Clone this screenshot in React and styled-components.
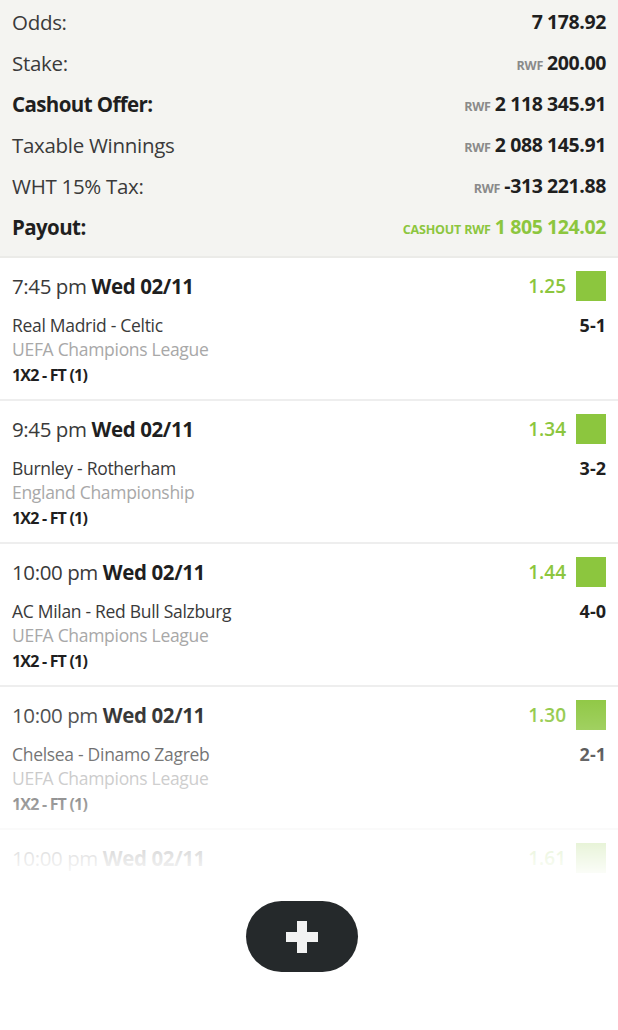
import React from 'react'
import styled, { createGlobalStyle } from 'styled-components'

const GlobalStyle = createGlobalStyle`
  *, *::before, *::after {
    box-sizing: border-box;
  }

  html, body {
    margin: 0;
    padding: 0;
    background: #ffffff;
    font-family: 'Open Sans', 'Liberation Sans', sans-serif;
    color: #2b2b2b;
  }
`

const Page = styled.div`
  width: 618px;
  display: flex;
  flex-direction: column;
`

const Summary = styled.div`
  background-color: #f4f4f1;
  padding: 1px 12px 9px 12px;
  border-bottom: 2px solid #ebebe8;
`

const SummaryRow = styled.div`
  height: 41px;
  display: flex;
  align-items: center;
  justify-content: space-between;
`

const Label = styled.span`
  font-size: 20.5px;
  font-weight: ${(p) => (p.bold ? 700 : 400)};
  color: ${(p) => (p.bold ? '#1f1f1f' : '#3a3a3a')};
  letter-spacing: ${(p) => (p.bold ? '-0.6px' : '-0.3px')};
`

const Value = styled.span`
  display: flex;
  align-items: baseline;
  gap: 4px;
  font-size: 19.5px;
  font-weight: 700;
  letter-spacing: -0.4px;
  color: ${(p) => (p.green ? '#8cc63e' : '#1f1f1f')};
`

const Currency = styled.span`
  font-size: 12.5px;
  font-weight: 700;
  color: ${(p) => (p.green ? '#8cc63e' : '#8a8a8a')};
  letter-spacing: -0.2px;
`

const ListWrap = styled.div`
  position: relative;
  height: 622px;
  overflow: hidden;
`

const Fade = styled.div`
  position: absolute;
  left: 0;
  right: 0;
  bottom: 0;
  height: 190px;
  background: linear-gradient(
    to bottom,
    rgba(255, 255, 255, 0) 0%,
    rgba(255, 255, 255, 0.3) 35%,
    rgba(255, 255, 255, 0.55) 60%,
    rgba(255, 255, 255, 0.85) 85%,
    rgba(255, 255, 255, 1) 100%
  );
  pointer-events: none;
`

const Card = styled.div`
  height: 143px;
  padding: 13px 12px 0 12px;
  border-bottom: 2px solid #eeeeee;
  display: flex;
  flex-direction: column;
`

const TopLine = styled.div`
  display: flex;
  align-items: center;
  justify-content: space-between;
  height: 30px;
`

const Time = styled.span`
  font-size: 20.5px;
  color: #3a3a3a;
  letter-spacing: -0.4px;

  b {
    font-weight: 700;
    color: #1f1f1f;
  }
`

const OddsBox = styled.div`
  display: flex;
  align-items: center;
  gap: 10px;
`

const OddsValue = styled.span`
  font-size: 19px;
  font-weight: 600;
  color: #8cc63e;
`

const Square = styled.span`
  width: 30px;
  height: 30px;
  background-color: #8cc63e;
`

const MatchLine = styled.div`
  display: flex;
  align-items: center;
  justify-content: space-between;
  margin-top: 11px;
  height: 25px;
`

const Teams = styled.span`
  font-size: 17.5px;
  color: #3a3a3a;
  letter-spacing: -0.3px;
`

const Score = styled.span`
  font-size: 18px;
  font-weight: 700;
  color: #1f1f1f;
`

const League = styled.div`
  font-size: 17.5px;
  color: #a8a8a8;
  height: 25px;
  line-height: 25px;
  letter-spacing: -0.3px;
`

const Market = styled.div`
  font-size: 16px;
  font-weight: 700;
  color: #1f1f1f;
  height: 27px;
  line-height: 27px;
  letter-spacing: -0.8px;
`

const ButtonArea = styled.div`
  display: flex;
  justify-content: center;
  padding: 21px 0 58px 0;
`

const AddButton = styled.button`
  width: 112px;
  height: 71px;
  margin-left: -14px;
  border: none;
  border-radius: 36px;
  background-color: #25292b;
  display: flex;
  align-items: center;
  justify-content: center;
  cursor: pointer;

  &:focus {
    outline: none;
  }
`

const rows = [
  { label: 'Odds:', value: '7 178.92' },
  { label: 'Stake:', currency: 'RWF', value: '200.00' },
  { label: 'Cashout Offer:', bold: true, currency: 'RWF', value: '2 118 345.91' },
  { label: 'Taxable Winnings', currency: 'RWF', value: '2 088 145.91' },
  { label: 'WHT 15% Tax:', currency: 'RWF', value: '-313 221.88' },
  { label: 'Payout:', bold: true, currency: 'CASHOUT RWF', value: '1 805 124.02', green: true },
]

const bets = [
  { time: '7:45 pm', date: 'Wed 02/11', odds: '1.25', teams: 'Real Madrid - Celtic', score: '5-1', league: 'UEFA Champions League' },
  { time: '9:45 pm', date: 'Wed 02/11', odds: '1.34', teams: 'Burnley - Rotherham', score: '3-2', league: 'England Championship' },
  { time: '10:00 pm', date: 'Wed 02/11', odds: '1.44', teams: 'AC Milan - Red Bull Salzburg', score: '4-0', league: 'UEFA Champions League' },
  { time: '10:00 pm', date: 'Wed 02/11', odds: '1.30', teams: 'Chelsea - Dinamo Zagreb', score: '2-1', league: 'UEFA Champions League' },
  { time: '10:00 pm', date: 'Wed 02/11', odds: '1.61' },
]

const App = () => {
  return (
    <Page>
      <GlobalStyle />
      <Summary>
        {rows.map((r) => (
          <SummaryRow key={r.label}>
            <Label bold={r.bold}>{r.label}</Label>
            <Value green={r.green}>
              {r.currency && <Currency green={r.green}>{r.currency}</Currency>}
              {r.value}
            </Value>
          </SummaryRow>
        ))}
      </Summary>
      <ListWrap>
        {bets.map((b, i) => (
          <Card key={i}>
            <TopLine>
              <Time>
                {b.time} <b>{b.date}</b>
              </Time>
              <OddsBox>
                <OddsValue>{b.odds}</OddsValue>
                <Square />
              </OddsBox>
            </TopLine>
            {b.teams && (
              <>
                <MatchLine>
                  <Teams>{b.teams}</Teams>
                  <Score>{b.score}</Score>
                </MatchLine>
                <League>{b.league}</League>
                <Market>1X2 - FT (1)</Market>
              </>
            )}
          </Card>
        ))}
        <Fade />
      </ListWrap>
      <ButtonArea>
        <AddButton aria-label="Add">
          <svg width="32" height="32" viewBox="0 0 32 32">
            <rect x="11" y="0" width="10" height="32" fill="#f2f2f2" />
            <rect x="0" y="11" width="32" height="10" fill="#f2f2f2" />
          </svg>
        </AddButton>
      </ButtonArea>
    </Page>
  )
}

export default App
